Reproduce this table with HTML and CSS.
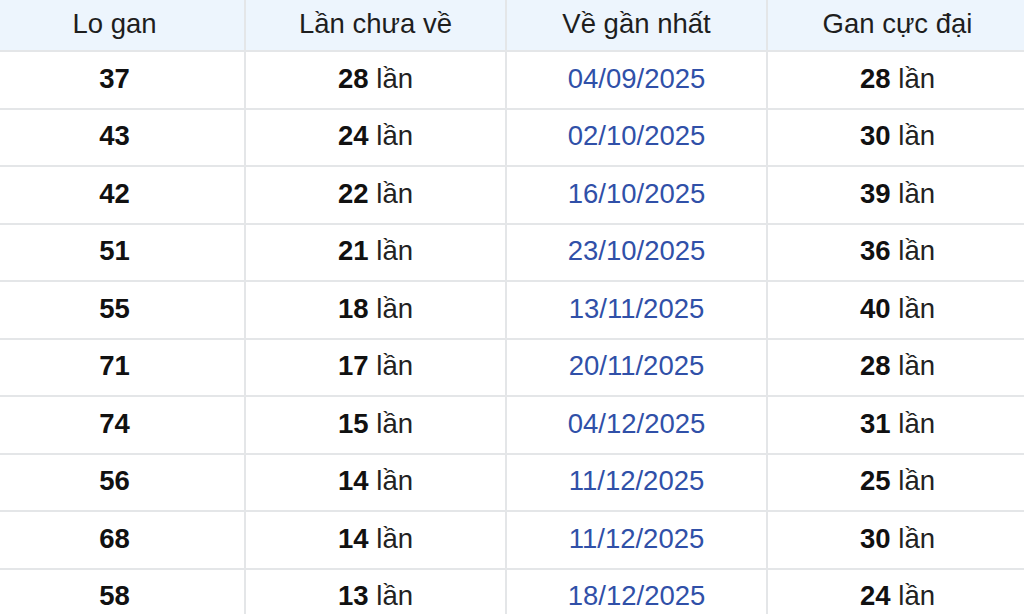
FILE: index.html
```html
<!DOCTYPE html>
<html lang="vi">
<head>
<meta charset="utf-8">
<link rel="stylesheet" href="styles.css">
</head>
<body>
<table class="gan">
  <thead>
    <tr><th>Lo gan</th><th>Lần chưa về</th><th>Về gần nhất</th><th>Gan cực đại</th></tr>
  </thead>
  <tbody>
    <tr><td class="num">37</td><td><b>28</b> lần</td><td class="date">04/09/2025</td><td><b>28</b> lần</td></tr>
    <tr><td class="num">43</td><td><b>24</b> lần</td><td class="date">02/10/2025</td><td><b>30</b> lần</td></tr>
    <tr><td class="num">42</td><td><b>22</b> lần</td><td class="date">16/10/2025</td><td><b>39</b> lần</td></tr>
    <tr><td class="num">51</td><td><b>21</b> lần</td><td class="date">23/10/2025</td><td><b>36</b> lần</td></tr>
    <tr><td class="num">55</td><td><b>18</b> lần</td><td class="date">13/11/2025</td><td><b>40</b> lần</td></tr>
    <tr><td class="num">71</td><td><b>17</b> lần</td><td class="date">20/11/2025</td><td><b>28</b> lần</td></tr>
    <tr><td class="num">74</td><td><b>15</b> lần</td><td class="date">04/12/2025</td><td><b>31</b> lần</td></tr>
    <tr><td class="num">56</td><td><b>14</b> lần</td><td class="date">11/12/2025</td><td><b>25</b> lần</td></tr>
    <tr><td class="num">68</td><td><b>14</b> lần</td><td class="date">11/12/2025</td><td><b>30</b> lần</td></tr>
    <tr><td class="num">58</td><td><b>13</b> lần</td><td class="date">18/12/2025</td><td><b>24</b> lần</td></tr>
  </tbody>
</table>
</body>
</html>
```
FILE: styles.css
```css
html, body {
  margin: 0;
  padding: 0;
  background: #ffffff;
  overflow: hidden;
}
body {
  font-family: "Liberation Sans", Arial, sans-serif;
  color: #1a1a1a;
}
.gan {
  border-collapse: collapse;
  table-layout: fixed;
  width: 1046px;
  margin-left: -17px;
  margin-top: -2px;
  font-size: 27.5px;
}
.gan th, .gan td {
  border: 2px solid #e4e6e8;
  text-align: center;
  padding: 0;
}
.gan th {
  background: #edf5fd;
  font-weight: normal;
  height: 47px;
  padding-bottom: 3px;
  color: #1e1e1e;
}
.gan td {
  height: 53.5px;
  padding-bottom: 2px;
  color: #222;
}
.gan td b, .gan td.num {
  font-weight: bold;
  color: #111;
}
.gan td.date {
  color: #3050a8;
}
```
